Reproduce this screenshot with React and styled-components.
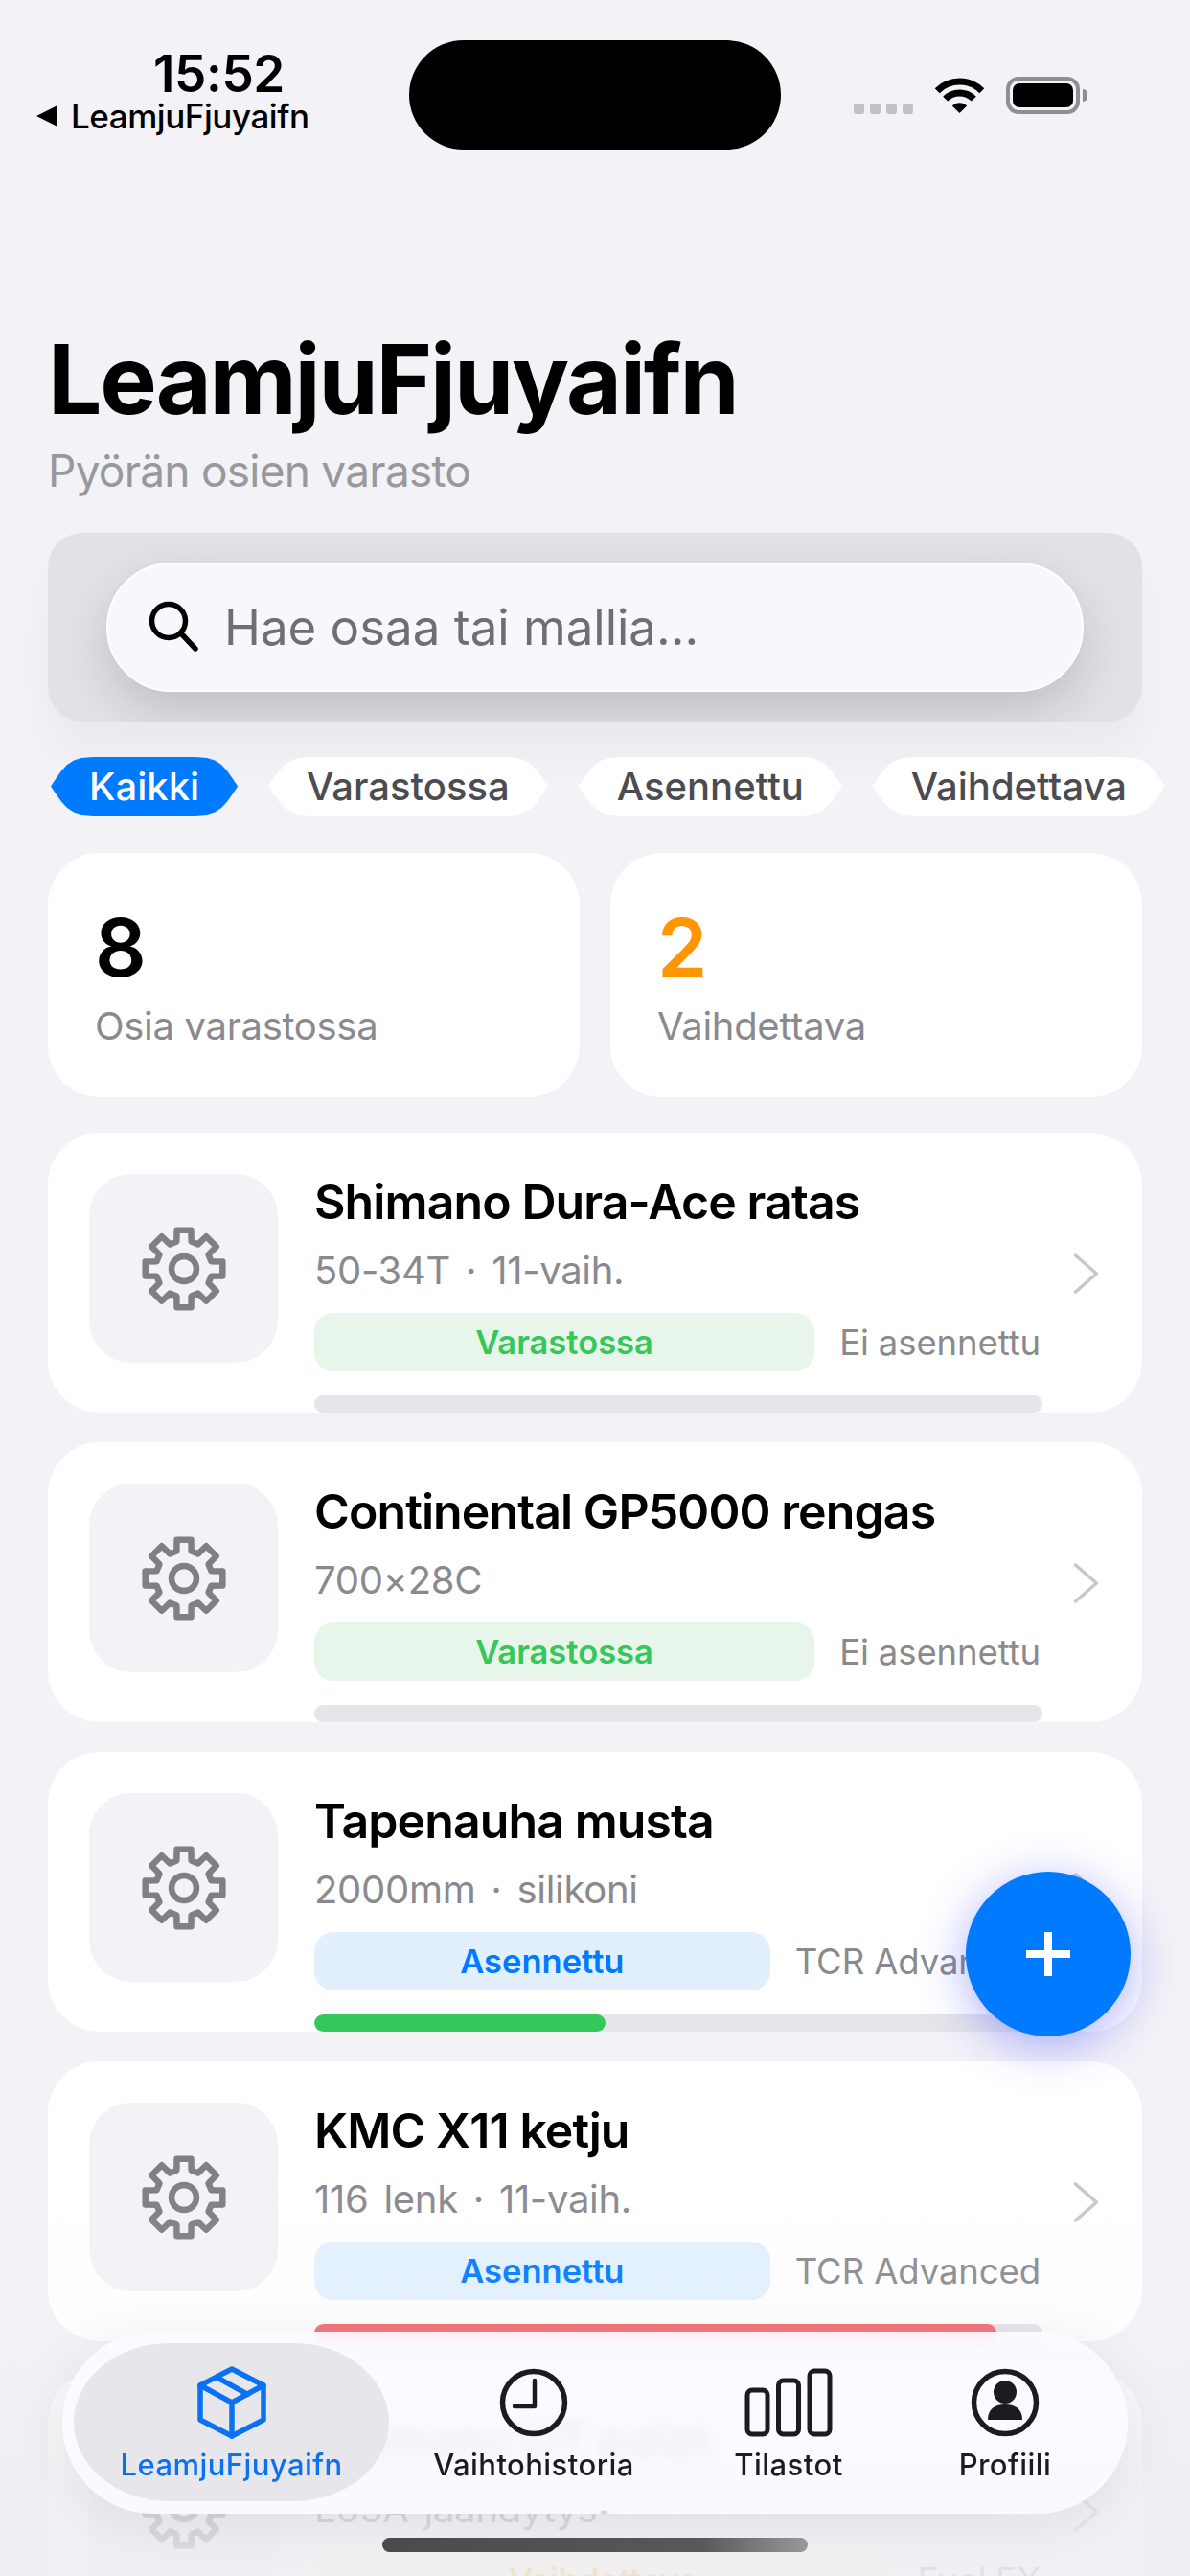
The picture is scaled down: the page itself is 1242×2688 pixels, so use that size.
import React from 'react'
import styled, { createGlobalStyle } from 'styled-components'

const GlobalStyle = createGlobalStyle`
  html, body {
    margin: 0;
    padding: 0;
    background: #f2f2f7;
  }
  * {
    box-sizing: border-box;
  }
`

const Page = styled.div`
  position: relative;
  width: 1242px;
  height: 2688px;
  overflow: hidden;
  background: #f2f2f7;
  font-family: Inter, "Liberation Sans", sans-serif;
  color: #000;
`

const StatusBar = styled.div`
  display: flex;
  align-items: flex-start;
  height: 341px;
  padding: 0 38px;
`

const StatusLeft = styled.div`
  width: 389px;
  padding-top: 51px;
`

const Time = styled.div`
  margin-left: 122px;
  font-size: 53px;
  line-height: 53px;
  font-weight: 600;
  letter-spacing: -0.4px;
`

const BackLink = styled.div`
  display: flex;
  align-items: center;
  margin-top: -2px;
  font-size: 35px;
  line-height: 38px;
  font-weight: 500;
  letter-spacing: -0.45px;
`

const BackArrow = styled.span`
  width: 0;
  height: 0;
  margin-right: 14px;
  border-top: 11px solid transparent;
  border-bottom: 11px solid transparent;
  border-right: 22px solid #000;
`

const Island = styled.div`
  width: 388px;
  height: 114px;
  margin-top: 42px;
  border-radius: 57px;
  background: #000;
`

const StatusRight = styled.div`
  display: flex;
  align-items: flex-start;
  margin-left: 76px;
  padding-top: 80px;
`

const Dots = styled.div`
  display: flex;
  gap: 6px;
  margin-top: 28px;
  margin-right: 22px;
`

const Dot = styled.span`
  width: 11px;
  height: 11px;
  border-radius: 3px;
  background: #c1c1c5;
`

const Battery = styled.div`
  position: relative;
  width: 77px;
  height: 39px;
  margin-left: 22px;
  padding: 3px;
  border: 4px solid #8e8e93;
  border-radius: 13px;

  &::before {
    content: "";
    display: block;
    height: 100%;
    border-radius: 7px;
    background: #000;
  }

  &::after {
    content: "";
    position: absolute;
    top: 9px;
    right: -12px;
    width: 5px;
    height: 13px;
    border-radius: 0 6px 6px 0;
    background: #8e8e93;
  }
`

const Content = styled.div`
  padding: 0 50px;
`

const Title = styled.h1`
  margin: 0;
  font-size: 100px;
  line-height: 110px;
  font-weight: 700;
  letter-spacing: -2.2px;
`

const Subtitle = styled.p`
  margin: 13px 0 0;
  font-size: 46px;
  line-height: 54px;
  color: #98989d;
  letter-spacing: -0.75px;
`

const SearchPanel = styled.div`
  margin-top: 38px;
  padding: 31px 61px;
  border-radius: 36px;
  overflow: hidden;
  background: #e1e1e6;
  box-shadow: 0 34px 50px rgba(0, 0, 0, 0.04);
`

const SearchPill = styled.div`
  display: flex;
  align-items: center;
  gap: 23px;
  height: 135px;
  padding-left: 42px;
  border-radius: 68px;
  border: 2px solid #fff;
  background: #f7f7fc;
  box-shadow: 0 20px 50px rgba(0, 0, 0, 0.15);
`

const SearchText = styled.span`
  font-size: 51px;
  color: #6e6e73;
`

const Chips = styled.div`
  display: flex;
  gap: 32px;
  margin-top: 37px;
  margin-left: 3px;
  margin-right: -50px;
`

// pointed capsule ends, the same outline mirrored on both sides
const chipEdge = [[0, 30.5], [5, 23], [11, 14.5], [17, 8], [24, 3.5], [32, 1], [44, 0]]
const chipOutline = [
  ...chipEdge.map(([x, y]) => `${x}px ${y}px`),
  ...[...chipEdge].reverse().map(([x, y]) => `calc(100% - ${x}px) ${y}px`),
  ...chipEdge.map(([x, y]) => `calc(100% - ${x}px) ${61 - y}px`),
  ...[...chipEdge].reverse().map(([x, y]) => `${x}px ${61 - y}px`),
].join(', ')

const Chip = styled.div`
  display: flex;
  align-items: center;
  height: 61px;
  padding: 0 40px;
  clip-path: polygon(${chipOutline});
  font-size: 40px;
  font-weight: 500;
  background: ${(p) => (p.$active ? '#007aff' : '#fff')};
  color: ${(p) => (p.$active ? '#fff' : '#4c4c50')};
`

const Stats = styled.div`
  display: grid;
  grid-template-columns: 1fr 1fr;
  gap: 32px;
  margin-top: 39px;
`

const StatCard = styled.div`
  height: 255px;
  padding: 54px 49px 0;
  border-radius: 54px;
  background: #fff;
`

const StatValue = styled.div`
  font-size: 84px;
  line-height: 90px;
  font-weight: 600;
  color: ${(p) => p.$color || '#000'};
`

const StatLabel = styled.div`
  margin-top: 13px;
  font-size: 40px;
  line-height: 48px;
  color: #8a8a8e;
  letter-spacing: -0.3px;
`

const List = styled.div`
  display: flex;
  flex-direction: column;
  gap: 31px;
  margin-top: 37px;
`

const Card = styled.div`
  display: flex;
  align-items: flex-start;
  flex-shrink: 0;
  height: 292px;
  padding-left: 43px;
  border-radius: 54px;
  overflow: hidden;
  background: #fff;
`

const IconTile = styled.div`
  display: flex;
  align-items: center;
  justify-content: center;
  flex-shrink: 0;
  width: 197px;
  height: 197px;
  margin-top: 43px;
  border-radius: 44px;
  background: #f2f2f7;
`

const CardBody = styled.div`
  width: 760px;
  margin-left: 38px;
  padding-top: 42px;
`

const CardTitle = styled.div`
  font-size: 50px;
  line-height: 60px;
  font-weight: 600;
  letter-spacing: -0.9px;
`

const CardSub = styled.div`
  margin-top: 18px;
  font-size: 40px;
  line-height: 47px;
  color: #8a8a8e;
  letter-spacing: -0.3px;
  word-spacing: 5px;
`

const BadgeRow = styled.div`
  display: flex;
  align-items: center;
  gap: 26px;
  margin-top: 21px;
`

const Badge = styled.div`
  flex: 1;
  height: 61px;
  border-radius: 20px;
  text-align: center;
  font-size: 34.5px;
  line-height: 61px;
  font-weight: 600;
  background: ${(p) => p.$bg};
  color: ${(p) => p.$color};
`

const Owner = styled.div`
  padding-right: 2px;
  font-size: 36.5px;
  letter-spacing: -0.1px;
  color: #8a8a8e;
  white-space: nowrap;
`

const Track = styled.div`
  height: 18px;
  margin-top: 25px;
  border-radius: 9px;
  overflow: hidden;
  background: #e5e5ea;
`

const Fill = styled.div`
  height: 100%;
  border-radius: 9px;
  background: ${(p) => p.$color};
`

const Chevron = styled.svg`
  flex-shrink: 0;
  margin-top: 126px;
  margin-left: 32px;
`

const BottomFade = styled.div`
  position: absolute;
  left: 0;
  right: 0;
  bottom: 0;
  height: 420px;
  pointer-events: none;
  background: linear-gradient(
    to bottom,
    rgba(236, 236, 241, 0) 0%,
    rgba(236, 236, 241, 0.12) 40%,
    rgba(236, 236, 241, 0.72) 78%,
    rgba(238, 238, 242, 0.88) 100%
  );
`

const Fab = styled.button`
  position: absolute;
  top: 1953px;
  right: 62px;
  display: flex;
  align-items: center;
  justify-content: center;
  width: 172px;
  height: 172px;
  padding: 0;
  border: 0;
  border-radius: 50%;
  background: #007aff;
  box-shadow: 0 10px 50px rgba(50, 60, 255, 0.4);
`

const TabBar = styled.nav`
  position: absolute;
  left: 65px;
  bottom: 65px;
  display: grid;
  grid-template-columns: 329px 302px 230px 1fr;
  width: 1112px;
  height: 190px;
  padding: 12px 17px 13px 12px;
  border-radius: 95px;
  overflow: hidden;
  background: rgba(251, 251, 255, 0.9);
  backdrop-filter: blur(7px);
  box-shadow: 0 10px 60px rgba(0, 0, 0, 0.07);
`

const Tab = styled.div`
  position: relative;
  display: flex;
  flex-direction: column;
  align-items: center;
  justify-content: flex-end;
  gap: 8px;
  padding-bottom: 19px;
  border-radius: 100px / 83px;
  background: ${(p) => (p.$active ? '#e7e7eb' : 'transparent')};
  color: ${(p) => (p.$active ? '#0a72f2' : '#1c1c1e')};
`

const TabIcon = styled.svg`
  display: block;
`

const TabLabel = styled.span`
  font-size: 31px;
  line-height: 38px;
  font-weight: 500;
  letter-spacing: 0.45px;
`

const Reflection = styled.div`
  position: absolute;
  left: 263px;
  bottom: 0;
  font-size: 50px;
  line-height: 44px;
  font-weight: 600;
  letter-spacing: -0.9px;
  color: rgba(0, 0, 0, 0.16);
  filter: blur(1px);
  transform: scaleY(-0.55);
  transform-origin: bottom;
  white-space: nowrap;
`

const HomeBar = styled.div`
  position: absolute;
  left: 399px;
  bottom: 25px;
  width: 444px;
  height: 15px;
  border-radius: 8px;
  background: linear-gradient(to right, #4a4a4c 0%, #58585a 75%, #99999b 100%);
`

const gearPath = (() => {
  const cx = 46
  const cy = 46
  const rad = (d) => (d * Math.PI) / 180
  const pts = []
  for (let k = 0; k < 8; k++) {
    const a = -90 + k * 45
    ;[[29.5, -15], [41, -10.5], [41, 10.5], [29.5, 15]].forEach(([r, da]) => {
      pts.push(`${(cx + r * Math.cos(rad(a + da))).toFixed(2)} ${(cy + r * Math.sin(rad(a + da))).toFixed(2)}`)
    })
  }
  return `M${pts.join('L')}Z`
})()

const GearIcon = () => (
  <svg width="92" height="92" viewBox="0 0 92 92" fill="none" stroke="#808084" strokeWidth="6.5" strokeLinejoin="round">
    <path d={gearPath} />
    <circle cx="46" cy="46" r="13" />
  </svg>
)

const WifiIcon = () => (
  <svg width="53" height="38" viewBox="0 0 53 38" fill="none">
    <path d="M3.2 14.7A33 33 0 0 1 49.8 14.7" stroke="#000" strokeWidth="7" />
    <path d="M11.65 23.15A21 21 0 0 1 41.35 23.15" stroke="#000" strokeWidth="7" />
    <path d="M26.5 38L18.9 30.4A10.8 10.8 0 0 1 34.1 30.4Z" fill="#000" />
  </svg>
)

const SearchIcon = () => (
  <svg width="56" height="56" viewBox="0 0 56 56" fill="none" stroke="#000" strokeWidth="5.5" strokeLinecap="round">
    <circle cx="21" cy="21" r="17.5" />
    <path d="M33.5 33.5L49 50" />
  </svg>
)

const ChevronIcon = () => (
  <Chevron width="27" height="42" viewBox="0 0 27 42" fill="none" stroke="#c7c7cc" strokeWidth="3.5" strokeLinecap="round" strokeLinejoin="round">
    <path d="M2.5 2L24.5 21L2.5 40" />
  </Chevron>
)

const BoxIcon = () => (
  <TabIcon width="72" height="76" viewBox="0 0 72 76" fill="none" stroke="currentColor" strokeWidth="5.5" strokeLinejoin="round" strokeLinecap="round">
    <path d="M36 3L69 20V56L36 73L3 56V20Z" />
    <path d="M3 20L36 38L69 20M36 38V73M20 11.5L52.5 29.5" />
  </TabIcon>
)

const ClockIcon = () => (
  <TabIcon width="72" height="76" viewBox="0 0 72 76" fill="none" stroke="currentColor" strokeWidth="5.5" strokeLinecap="round" strokeLinejoin="round">
    <circle cx="36" cy="38" r="32.5" />
    <path d="M37 15V42H16" strokeWidth="4.5" />
  </TabIcon>
)

const BarsIcon = () => (
  <TabIcon width="92" height="76" viewBox="0 0 92 76" fill="none" stroke="currentColor" strokeWidth="5">
    <rect x="3" y="25" width="21" height="46" rx="5" />
    <rect x="35.5" y="15" width="21" height="56" rx="5" />
    <rect x="68" y="5" width="21" height="66" rx="5" />
  </TabIcon>
)

const ProfileIcon = () => (
  <TabIcon width="72" height="76" viewBox="0 0 72 76">
    <circle cx="36" cy="38" r="32.5" fill="none" stroke="currentColor" strokeWidth="5.5" />
    <ellipse cx="36" cy="27" rx="12" ry="12" fill="currentColor" />
    <path d="M18 56C18 44 26 40 36 40C46 40 54 44 54 56Z" fill="currentColor" />
  </TabIcon>
)

const GREEN = { bg: '#e8f5ea', color: '#34c759', label: 'Varastossa' }
const BLUE = { bg: '#e2f0fe', color: '#007aff', label: 'Asennettu' }
const ORANGE = { bg: '#fff3e0', color: '#ff9500', label: 'Vaihdettava' }

const parts = [
  { name: 'Shimano Dura-Ace ratas', sub: '50-34T · 11-vaih.', status: GREEN, owner: 'Ei asennettu', fill: 0 },
  { name: 'Continental GP5000 rengas', sub: '700×28C', status: GREEN, owner: 'Ei asennettu', fill: 0 },
  { name: 'Tapenauha musta', sub: '2000mm · silikoni', status: BLUE, owner: 'TCR Advanced', fill: 40, color: '#34c759' },
  { name: 'KMC X11 ketju', sub: '116 lenk · 11-vaih.', status: BLUE, owner: 'TCR Advanced', fill: 93.7, color: '#f4686e' },
  { name: 'Shimano UT palat', sub: 'L05A jäähdytys', status: ORANGE, owner: 'Fuel EX', fill: 80, color: '#ff9500' },
]

const PartCard = ({ part }) => (
  <Card>
    <IconTile>
      <GearIcon />
    </IconTile>
    <CardBody>
      <CardTitle>{part.name}</CardTitle>
      <CardSub>{part.sub}</CardSub>
      <BadgeRow>
        <Badge $bg={part.status.bg} $color={part.status.color}>{part.status.label}</Badge>
        <Owner>{part.owner}</Owner>
      </BadgeRow>
      <Track>
        {part.fill > 0 && <Fill $color={part.color} style={{ width: `${part.fill}%` }} />}
      </Track>
    </CardBody>
    <ChevronIcon />
  </Card>
)

const App = () => {
  return (
    <Page>
      <GlobalStyle />
      <StatusBar>
        <StatusLeft>
          <Time>15:52</Time>
          <BackLink>
            <BackArrow />
            LeamjuFjuyaifn
          </BackLink>
        </StatusLeft>
        <Island />
        <StatusRight>
          <Dots>
            <Dot />
            <Dot />
            <Dot />
            <Dot />
          </Dots>
          <WifiIcon />
          <Battery />
        </StatusRight>
      </StatusBar>

      <Content>
        <Title>LeamjuFjuyaifn</Title>
        <Subtitle>Pyörän osien varasto</Subtitle>

        <SearchPanel>
          <SearchPill>
            <SearchIcon />
            <SearchText>Hae osaa tai mallia...</SearchText>
          </SearchPill>
        </SearchPanel>

        <Chips>
          <Chip $active>Kaikki</Chip>
          <Chip>Varastossa</Chip>
          <Chip>Asennettu</Chip>
          <Chip>Vaihdettava</Chip>
        </Chips>

        <Stats>
          <StatCard>
            <StatValue>8</StatValue>
            <StatLabel>Osia varastossa</StatLabel>
          </StatCard>
          <StatCard>
            <StatValue $color="#ff9500">2</StatValue>
            <StatLabel>Vaihdettava</StatLabel>
          </StatCard>
        </Stats>

        <List>
          {parts.map((part) => (
            <PartCard key={part.name} part={part} />
          ))}
        </List>
      </Content>

      <BottomFade />

      <Fab aria-label="Lisää osa">
        <svg width="46" height="46" viewBox="0 0 46 46" stroke="#fff" strokeWidth="8">
          <path d="M23 0V46M0 23H46" />
        </svg>
      </Fab>

      <TabBar>
        <Tab $active>
          <BoxIcon />
          <TabLabel>LeamjuFjuyaifn</TabLabel>
        </Tab>
        <Tab>
          <ClockIcon />
          <TabLabel>Vaihtohistoria</TabLabel>
        </Tab>
        <Tab>
          <BarsIcon />
          <TabLabel>Tilastot</TabLabel>
        </Tab>
        <Tab>
          <ProfileIcon />
          <TabLabel>Profiili</TabLabel>
        </Tab>
        <Reflection aria-hidden="true">Shimano UT palat</Reflection>
      </TabBar>

      <HomeBar />
    </Page>
  )
}

export default App
